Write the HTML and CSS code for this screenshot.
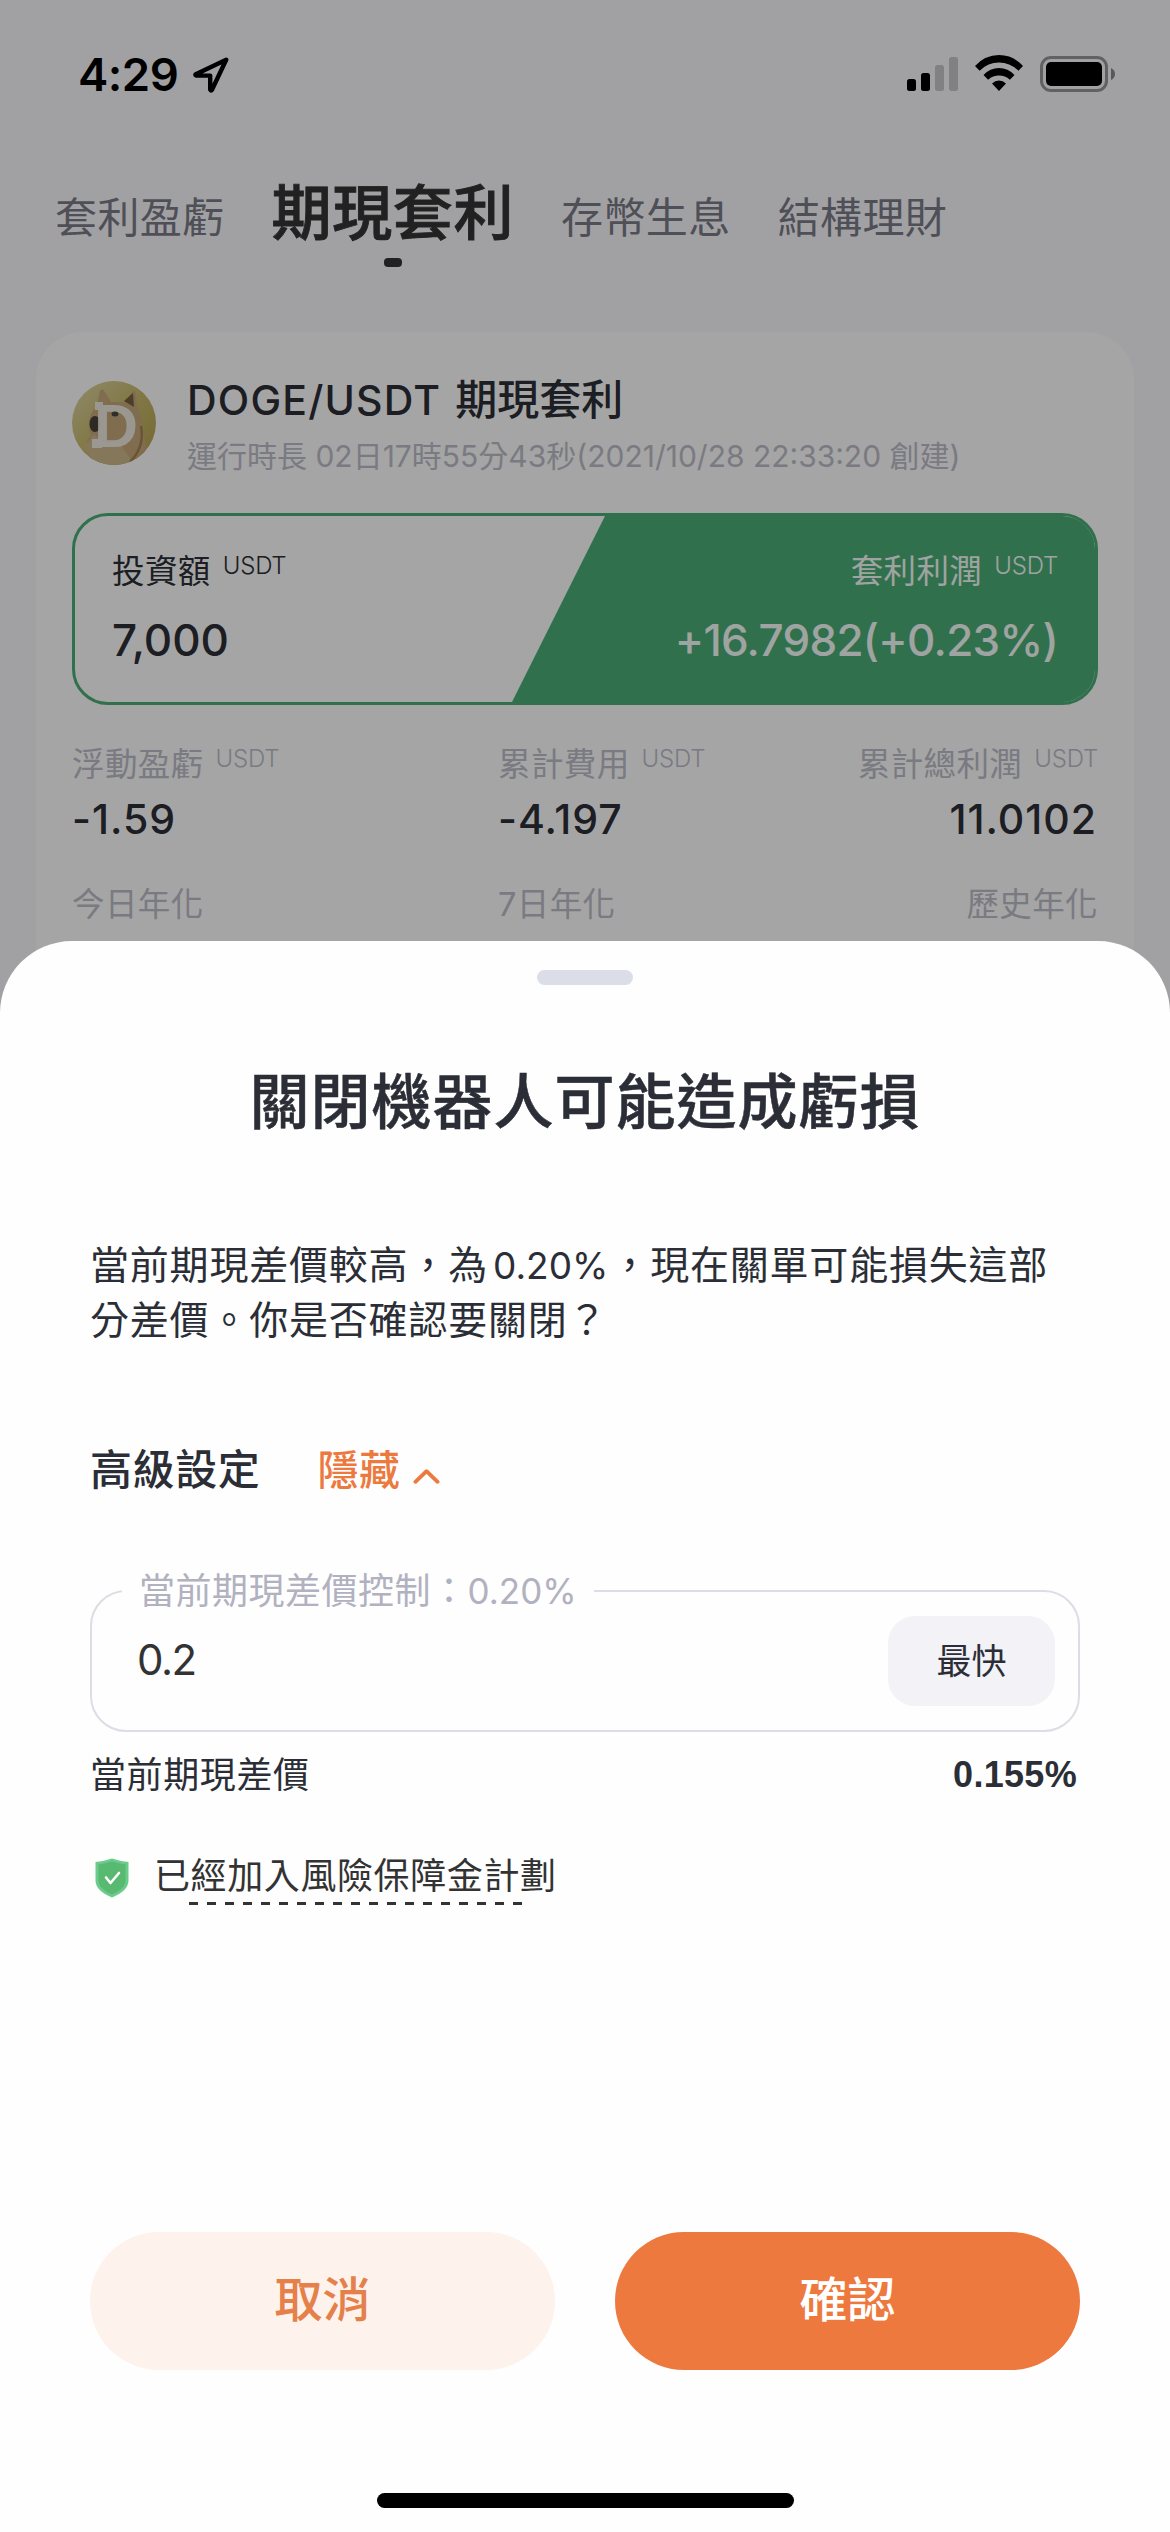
FILE: index.html
```html
<!DOCTYPE html>
<html lang="zh-Hant">
<head>
<meta charset="utf-8">
<title>期現套利</title>
<link rel="stylesheet" href="styles.css">
</head>
<body>
<div class="screen">
  <header class="status">
    <div class="status-left">
      <span class="clock">4:29</span>
      <svg class="location" viewBox="0 0 36 36"><path d="M33.2 2.8 2.8 17.2q-1 .8.4 1.4H17.2V32.6q.8 1.800 1.800.2Z" fill="none" stroke="#000" stroke-width="4.400" stroke-linejoin="round"/></svg>
    </div>
    <div class="status-right">
      <svg class="signal" viewBox="0 0 51 34"><rect y="22" width="9" height="12" rx="2.500"/><rect x="14" y="16" width="9" height="18" rx="2.500"/><rect x="28" y="8" width="9" height="26" rx="2.500" opacity=".2"/><rect x="42" width="9" height="34" rx="2.500" opacity=".2"/></svg>
      <svg class="wifi" viewBox="0 0 48 36"><path d="M0 11Q10 0 24 0T48 11l-4.600 4.700Q35 7.500 24 7.500T4.600 15.700ZM8.500 20Q15 13 24 13T39.500 20L34.900 24.700Q30 20.500 24 20.500T13.100 24.700ZM17 28.500Q20 25.500 24 25.500T31 28.500L24 36Z"/></svg>
      <svg class="battery" viewBox="0 0 75 36"><rect x="1.500" y="1.500" width="65" height="33" rx="9.500" fill="none" stroke="#000" stroke-opacity=".4" stroke-width="3"/><rect x="6" y="6" width="56" height="24" rx="5"/><path d="M71 12q4 2 4 6t-4 6Z" opacity=".45"/></svg>
    </div>
  </header>

  <nav class="tabs">
    <span class="tab">套利盈虧</span>
    <span class="tab active">期現套利</span>
    <span class="tab">存幣生息</span>
    <span class="tab">結構理財</span>
  </nav>

  <main class="card">
    <div class="bot">
      <svg class="coin" viewBox="0 0 84 84">
        <defs>
          <linearGradient id="gold" x1="0" y1="0" x2="1" y2="1"><stop offset="0" stop-color="#dcd4a4"/><stop offset=".45" stop-color="#c9bb70"/><stop offset="1" stop-color="#b3a04b"/></linearGradient>
          <clipPath id="disc"><circle cx="42" cy="42" r="42"/></clipPath>
        </defs>
        <circle cx="42" cy="42" r="42" fill="url(#gold)"/>
        <g clip-path="url(#disc)">
          <path d="M25 24 28 10q2-4 5 1l6 10h13l8-10q4-3 4 3l1 11q5 11 6 22l3 19q0 15-14 22H23L14 68q-1-8 5-13-4-10 0-22Z" fill="#c5a779"/>
          <path d="M22 53q8 11 25 9l16 22H23L12 66Z" fill="#cdb78a"/>
          <path d="M52 20l9-8 1 14-5-3Z" fill="#77603f"/>
          <path d="M69 45q4 21-11 36" fill="none" stroke="#a38250" stroke-width="2.500"/>
          <ellipse cx="23" cy="43" rx="5.500" ry="8" fill="#454238"/>
        </g>
        <g class="coin-letter">
          <text x="22" y="66" textLength="44" lengthAdjust="spacingAndGlyphs">D</text>
          <path d="M23 21h8v8h-8zM20 58h10v9h-10z"/>
        </g>
        <ellipse cx="43" cy="33" rx="3.500" ry="2.500" fill="#4b473e"/>
      </svg>
      <div class="bot-text">
        <div class="bot-name"><span class="pair">DOGE/USDT</span>期現套利</div>
        <div class="bot-time">運行時長 02日17時55分43秒(2021/10/28 22:33:20 創建)</div>
      </div>
    </div>

    <section class="profit">
      <svg class="profit-fill" viewBox="0 0 1020 186" preserveAspectRatio="none"><path d="M530 0H1020V186H437Z" fill="#4aac76"/></svg>
      <div class="stat">
        <div class="label">投資額<span class="unit">USDT</span></div>
        <div class="amount">7,000</div>
      </div>
      <div class="stat gain">
        <div class="label">套利利潤<span class="unit">USDT</span></div>
        <div class="amount">+16.7982(+0.23%)</div>
      </div>
    </section>

    <section class="metrics">
      <div><div class="label">浮動盈虧<span class="unit">USDT</span></div><div class="value">-1.59</div><div class="label">今日年化</div></div>
      <div><div class="label">累計費用<span class="unit">USDT</span></div><div class="value">-4.197</div><div class="label">7日年化</div></div>
      <div class="end"><div class="label">累計總利潤<span class="unit">USDT</span></div><div class="value">11.0102</div><div class="label">歷史年化</div></div>
    </section>
  </main>

  <div class="scrim"></div>

  <section class="sheet">
    <div class="handle"></div>
    <h1 class="title">關閉機器人可能造成虧損</h1>
    <p class="message">當前期現差價較高，為<span class="num">0.20%</span>，現在關單可能損失這部<br>分差價。你是否確認要關閉？</p>
    <div class="advanced">
      <span>高級設定</span>
      <span class="toggle">隱藏</span>
      <svg class="chevron" viewBox="0 0 28 16"><path d="M2.500 14 14 3 25.500 14" fill="none" stroke="#ec7a3e" stroke-width="4" stroke-linecap="round" stroke-linejoin="round"/></svg>
    </div>
    <div class="field">
      <span class="legend">當前期現差價控制：<span class="legend-num">0.20%</span></span>
      <span class="input">0.2</span>
      <span class="fastest">最快</span>
    </div>
    <div class="current"><span>當前期現差價</span><b class="rate">0.155%</b></div>
    <div class="fund">
      <svg class="shield" viewBox="0 0 34 40"><path d="M17 .5Q24 3 33.500 4V23Q33 33 17 39.500 1 33 .5 23V4Q10 3 17 .5Z" fill="#6bcb8b"/><path d="M17 3.500Q24 5.500 30.500 6.500V23Q30 31 17 36.500 4 31 3.500 23V6.500Q10 5.500 17 3.500Z" fill="#58b970"/><path d="M11 19.500 15.500 25 24 15" fill="none" stroke="#fff" stroke-width="2.600" stroke-linecap="round" stroke-linejoin="round"/></svg>
      <span class="fund-text">已經加入風險保障金計劃</span>
    </div>
    <div class="actions">
      <span class="button cancel">取消</span>
      <span class="button confirm">確認</span>
    </div>
    <div class="home"></div>
  </section>
</div>
</body>
</html>
```

FILE: styles.css
```css
* { box-sizing: border-box; }
body { margin: 0; font-family: Inter, "Noto Sans CJK TC", sans-serif; color: #2b2e36; }
svg { display: block; flex: none; }
.screen { position: relative; width: 1170px; height: 2532px; overflow: hidden; background: #f8f8fb; }

.status { height: 150px; padding: 55px 55px 0 78px; display: flex; justify-content: space-between; align-items: flex-start; }
.status-left, .status-right { display: flex; align-items: flex-start; }
.clock { width: 115px; height: 40px; line-height: 40px; font-size: 45.500px; font-weight: 600; color: #000; letter-spacing: -.5px; }
.location { width: 36px; height: 36px; margin-top: 2px; }
.signal { width: 51px; height: 34px; margin: 2px 17px 0 0; }
.wifi { width: 48px; height: 36px; margin-right: 17px; }
.battery { width: 75px; height: 36px; margin-top: 1px; }

.tabs { height: 182px; padding-left: 55px; display: flex; align-items: flex-start; }
.tab { height: 60px; line-height: 60px; margin-top: 38px; margin-right: 47px; font-size: 42px; letter-spacing: .4px; color: #7a7a88; white-space: nowrap; }
.tab.active { height: 120px; margin-top: 33px; font-size: 60px; font-weight: 500; letter-spacing: .6px; color: #343434; -webkit-text-stroke: .9px #343434; }
.tab.active::after { content: ""; display: block; width: 18px; height: 9px; margin: 15px auto 0; border-radius: 4px; background: #343434; }

.card { margin: 0 36px; height: 800px; padding: 36px 36px 0; border-radius: 48px; background: #fefefd; }
.bot { height: 145px; display: flex; }
.coin { width: 84px; height: 84px; margin: 13px 31px 0 0; }
.coin-letter { font: 700 62px "Liberation Sans", sans-serif; fill: #f1eee8; opacity: .92; }
.bot-name { height: 64px; line-height: 64px; font-size: 42px; font-weight: 500; white-space: nowrap; }
.pair { font-size: 41px; margin-right: 14px; letter-spacing: 1.200px; }
.bot-time { height: 48px; line-height: 48px; font-size: 30px; color: #bcbcc8; white-space: nowrap; }

.profit { position: relative; height: 192px; display: flex; justify-content: space-between; padding: 37px 37px 0; border: 3px solid #4aac76; border-radius: 36px; overflow: hidden; }
.profit-fill { position: absolute; inset: 0; width: 1020px; height: 186px; }
.stat { position: relative; }
.label { height: 38px; line-height: 38px; font-size: 32.500px; letter-spacing: .4px; white-space: nowrap; }
.unit { font-size: 24px; font-weight: 300; margin-left: 12px; position: relative; top: -9px; letter-spacing: -.2px; }
.amount { margin-top: 28px; height: 42px; line-height: 42px; font-size: 44px; font-weight: 500; white-space: nowrap; }
.gain { text-align: right; color: #f4fbf7; }
.gain .amount { letter-spacing: -.7px; }

.metrics { margin-top: 41px; display: grid; grid-template-columns: 426px 300px 1fr; }
.metrics .label { color: #bcbcc8; }
.value { height: 54px; line-height: 54px; margin: 8px 0 40px; font-size: 41px; font-weight: 500; letter-spacing: 1px; }
.end { text-align: right; }
.end .value { margin-right: 1px; }

.scrim { position: absolute; inset: 0; background: rgba(0, 0, 0, .35); }

.sheet { position: absolute; left: 0; right: 0; top: 941px; height: 1591px; padding: 29px 90px 0; background: #fefefe; border-radius: 72px 72px 0 0; }
.handle { width: 96px; height: 15px; margin: 0 auto; border-radius: 8px; background: #dbdde8; }
.title { margin: 78px 0 0; height: 79px; line-height: 79px; text-align: center; font-size: 60px; font-weight: 500; letter-spacing: 1px; white-space: nowrap; -webkit-text-stroke: .5px #2b2e36; }
.message { margin: 96px 0 0; height: 108px; line-height: 54px; font-size: 39px; letter-spacing: .8px; white-space: nowrap; }
.num { font-size: 37px; letter-spacing: 0; margin: 0 2px 0 5px; }
.advanced { margin-top: 94px; height: 60px; line-height: 60px; display: flex; font-size: 42px; font-weight: 500; letter-spacing: .6px; }
.toggle { margin-left: 57px; color: #ec7a3e; font-size: 41px; }
.chevron { width: 27px; height: 16px; margin: 28px 0 0 12px; }
.field { position: relative; margin-top: 90px; height: 142px; padding: 0 23px 0 45px; display: flex; justify-content: space-between; align-items: center; border: 2px solid #dcdde5; border-radius: 36px; }
.legend { position: absolute; left: 30px; top: -26px; height: 50px; line-height: 50px; padding: 0 17px; background: #fefefe; font-size: 36px; letter-spacing: .5px; color: #b1b1c0; white-space: nowrap; }
.legend-num { font-size: 35px; letter-spacing: 0; }
.input { font-size: 42px; letter-spacing: -1.500px; padding-bottom: 4px; color: #333; }
.fastest { width: 167px; height: 90px; line-height: 90px; border-radius: 27px; background: #f2f2f7; text-align: center; font-size: 35px; }
.current { margin-top: 18px; height: 50px; line-height: 50px; padding-right: 3px; display: flex; justify-content: space-between; font-size: 36px; letter-spacing: .6px; }
.rate { font-family: "Liberation Sans", sans-serif; font-size: 36px; font-weight: 700; letter-spacing: .3px; }
.fund { margin-top: 51px; height: 60px; padding-left: 5px; display: flex; }
.shield { width: 34px; height: 40px; margin: 7px 25px 0 0; }
.fund-text { position: relative; line-height: 50px; font-size: 36px; letter-spacing: .6px; color: #333; white-space: nowrap; }
.fund-text::after { content: ""; position: absolute; left: 35px; top: 51px; width: 334px; height: 3px; background: repeating-linear-gradient(90deg, #333 0 9px, transparent 9px 18px); }
.actions { margin-top: 321px; display: flex; gap: 60px; }
.button { width: 465px; height: 138px; line-height: 136px; border-radius: 69px; text-align: center; font-size: 48px; font-weight: 500; }
.cancel { background: #fdf2ec; color: #e5804a; }
.confirm { background: #ed793e; color: #fff; }
.home { width: 417px; height: 15px; margin: 123px auto 0; border-radius: 8px; background: #000; }
```
